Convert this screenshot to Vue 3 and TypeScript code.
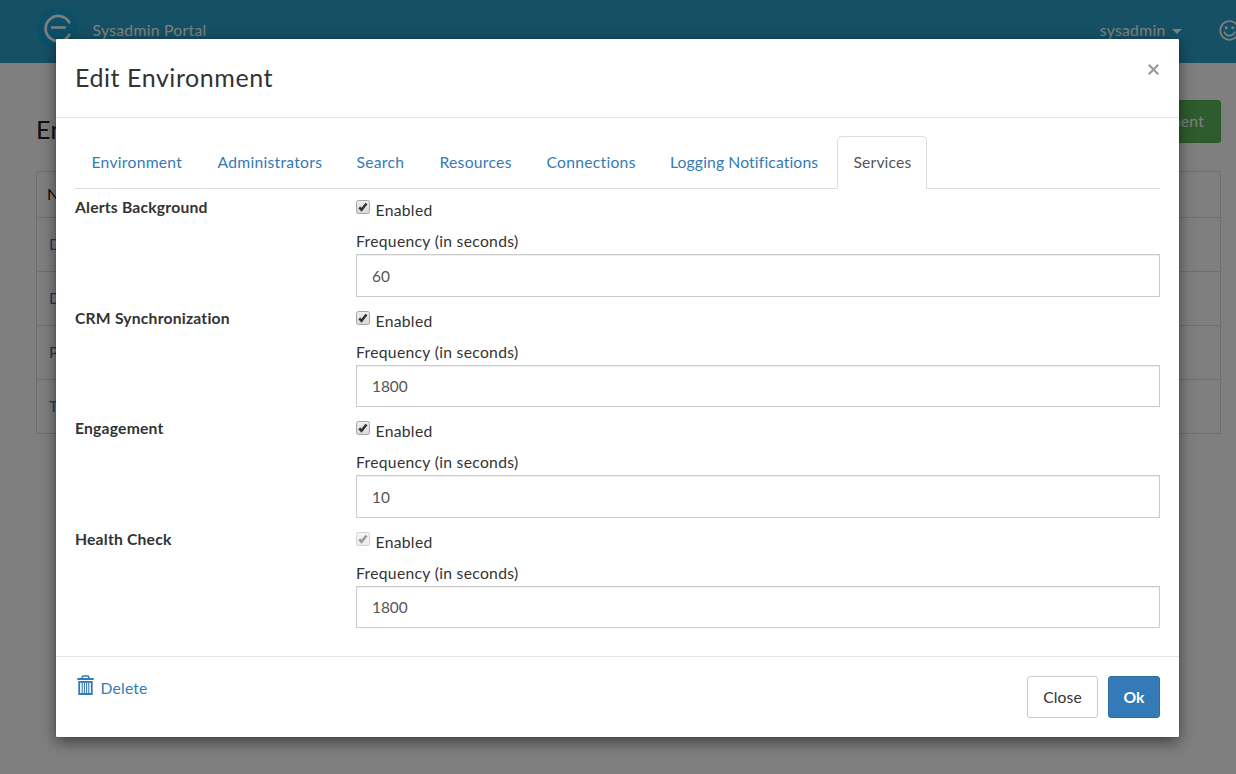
<script setup lang="ts">
import { ref } from 'vue'

interface Tab { label: string; width: number; tight?: boolean }
interface Service { name: string; seconds: number; locked: boolean }

const tabs: Tab[] = [
  { label: 'Environment', width: 91 },
  { label: 'Administrators', width: 104 },
  { label: 'Search', width: 48 },
  { label: 'Resources', width: 72 },
  { label: 'Connections', width: 88.5 },
  { label: 'Logging Notifications', width: 148.5, tight: true },
  { label: 'Services', width: 58 },
]
const active = ref('Services')
const services = ref<Service[]>([
  { name: 'Alerts Background', seconds: 60, locked: false },
  { name: 'CRM Synchronization', seconds: 1800, locked: false },
  { name: 'Engagement', seconds: 10, locked: false },
  { name: 'Health Check', seconds: 1800, locked: true },
])
const rows = ['Demo', 'Development', 'Production', 'Test']
</script>

<template>
  <div class="page">
    <header class="navbar">
      <svg class="logo" width="42" height="42" viewBox="0 0 42 42">
        <circle cx="21" cy="21" r="21" fill="#18a0d0" />
        <path d="M32.2 14.4A12.6 12.6 0 1 0 32.2 26.8" fill="none" stroke="#fff" stroke-width="2.7" stroke-linecap="round" />
        <path d="M15 19.4h12.8" stroke="#fff" stroke-width="2.5" stroke-linecap="round" />
      </svg>
      <span class="brand">Sysadmin Portal</span>
      <span class="user">sysadmin</span>
      <i class="caret"></i>
      <svg class="smile" width="21" height="21" viewBox="0 0 21 21" fill="none" stroke="#fff" stroke-width="1.8">
        <circle cx="10.5" cy="10.5" r="9.3" />
        <circle cx="7.2" cy="7.8" r="1.5" fill="#fff" stroke="none" />
        <circle cx="13.8" cy="7.8" r="1.5" fill="#fff" stroke="none" />
        <path d="M5.5 12.3c1.7 4.5 8.3 4.5 10 0" stroke-linecap="round" />
      </svg>
    </header>
    <main class="content">
      <div class="heading">
        <h1>Environments</h1>
        <button class="create">Create Environment</button>
      </div>
      <div class="table">
        <div class="thead">Name</div>
        <div v-for="r in rows" :key="r" class="trow">{{ r }}</div>
      </div>
    </main>
  </div>

  <div class="backdrop">
    <section class="modal">
      <div class="modal-head">
        <h2>Edit Environment</h2>
        <svg class="x" width="11" height="11" viewBox="0 0 11 11"><path d="M.8 .8l9.4 9.4M10.2 .8L.8 10.2" stroke="#999" stroke-width="2.2" /></svg>
      </div>
      <div class="modal-body">
        <nav class="tabs">
          <a v-for="t in tabs" :key="t.label" class="tab" :class="{ active: active === t.label, tight: t.tight }" @click="active = t.label"><span :style="{ width: t.width + 'px' }">{{ t.label }}</span></a>
        </nav>
        <div v-for="s in services" :key="s.name" class="service">
          <strong class="name">{{ s.name }}</strong>
          <div class="fields">
            <div class="check" :class="{ locked: s.locked }">
              <svg width="14" height="14" viewBox="0 0 14 14">
                <defs><linearGradient id="box" x2="0" y2="1"><stop stop-color="#eee" /><stop offset="1" stop-color="#d9d9d9" /></linearGradient></defs>
                <rect x=".5" y=".5" width="13" height="13" rx="2" fill="url(#box)" stroke="#a6a6a6" />
                <path d="M3.3 7.3l2.2 2.5 5-6.3" fill="none" stroke="#333" stroke-width="2.5" />
              </svg>
              <span>Enabled</span>
            </div>
            <div class="freq">Frequency (in seconds)</div>
            <div class="input">{{ s.seconds }}</div>
          </div>
        </div>
      </div>
      <footer class="modal-foot">
        <a class="delete">
          <svg width="17" height="20" viewBox="0 0 17 20" fill="none" stroke="#337ab7">
            <path d="M5.2 3V2q0-1 1-1h4.6q1 0 1 1v1" stroke-width="1.5" />
            <path d="M.3 4h16.4" stroke-width="2" />
            <path d="M2.2 6.8h12.6v12.2H2.2z" stroke-width="1.8" />
            <path d="M5.2 7v11M7.4 7v11M9.6 7v11M11.8 7v11" stroke-width="1.1" />
          </svg>
          <span>Delete</span>
        </a>
        <div class="buttons">
          <button class="btn">Close</button>
          <button class="btn primary">Ok</button>
        </div>
      </footer>
    </section>
  </div>
</template>

<style>
body { overflow: hidden; }
</style>

<style scoped>
.page, .backdrop { font: 15.7px/24px Lato, "Open Sans", sans-serif; color: #333; letter-spacing: .3px; box-sizing: border-box; }
.page *, .backdrop * { box-sizing: border-box; }
.page { height: 774px; background: #fff; overflow: hidden; }
.navbar { height: 63px; background: #2ca0ca; display: flex; color: #fff; padding-left: 37px; }
.logo { margin-top: 8px; flex: none; }
.brand { margin: 18px 0 0 13.5px; white-space: nowrap; }
.user { margin: 18px 0 0 auto; }
.caret { margin: 29px 37px 0 6.5px; border: 5px solid transparent; border-top-color: #fff; border-bottom: 0; height: 5px; }
.smile { margin: 19.5px -4px 0 0; flex: none; }
.content { padding: 37px 15px 0 36px; }
.heading { display: flex; justify-content: space-between; height: 71px; }
h1, h2 { font-weight: 400; margin: 0; }
h1 { font-size: 25px; line-height: 32px; margin-top: 13px; color: #222; }
.create { height: 43px; background: #5cb85c; border: 1px solid #4cae4c; border-radius: 3px; color: #fff; padding: 0 16px 2px; font: inherit; letter-spacing: .2px; }
.table { border: 1px solid #ddd; }
.thead { height: 45px; padding: 10px 10px; color: #111; }
.trow { height: 54px; border-top: 1px solid #ddd; padding: 14px 12px; color: #337ab7; }
.backdrop { position: absolute; inset: 0; background: rgba(0, 0, 0, .5); padding: 39px 57px 0 56px; }
.modal { height: 698px; background: #fff; border-radius: 1px; box-shadow: 0 5px 15px rgba(0, 0, 0, .5), 0 0 1px rgba(0, 0, 0, .6); display: flex; flex-direction: column; }
.modal-head { height: 79px; border-bottom: 1px solid #e5e5e5; display: flex; justify-content: space-between; padding: 22px 20px 0 19px; }
h2 { font-size: 25px; line-height: 32px; letter-spacing: .55px; }
.x { margin-top: 3px; }
.modal-body { flex: 1; padding: 18px 19px 0; }
.tabs { display: flex; gap: 3px; height: 53px; border-bottom: 1px solid #ddd; margin-bottom: 7px; letter-spacing: .26px; }
.tab { height: 53px; padding: 13px 14.5px 0 15.5px; border: 1px solid transparent; border-bottom: 0; border-radius: 5px 5px 0 0; color: #337ab7; cursor: pointer; }
.tab span { display: block; white-space: nowrap; }
.tab.tight { letter-spacing: .13px; }
.tab.active { color: #555; border-color: #ddd; background: #fff; letter-spacing: .14px; }
.service { display: flex; height: 110.57px; }
.name { width: 281px; margin-top: -1px; letter-spacing: .2px; }
.fields { flex: 1; }
.check { display: flex; gap: 5.5px; height: 34px; }
.check svg { margin-top: 4px; }
.check span { margin-top: 2px; }
.check.locked svg { opacity: .5; }
.freq { height: 24.3px; line-height: 22px; }
.input { height: 42.4px; border: 1px solid #ccc; box-shadow: inset 0 1px 1px rgba(0, 0, 0, .075); padding: 8.3px 15px; color: #555; font-size: 15.4px; letter-spacing: 0; }
.modal-foot { height: 81px; border-top: 1px solid #e5e5e5; padding: 19px 19px 0 20.5px; display: flex; justify-content: space-between; }
.delete { display: flex; gap: 7px; color: #337ab7; letter-spacing: .2px; }
.delete svg { margin-top: -1px; }
.buttons { display: flex; gap: 10px; }
.btn { width: 71px; height: 42px; border: 1px solid #ccc; border-radius: 3px; background: #fff; font: inherit; letter-spacing: .1px; color: #333; padding: 0; }
.primary { width: 52px; background: #337ab7; border-color: #2e6da4; color: #fff; font-weight: 700; }
</style>
